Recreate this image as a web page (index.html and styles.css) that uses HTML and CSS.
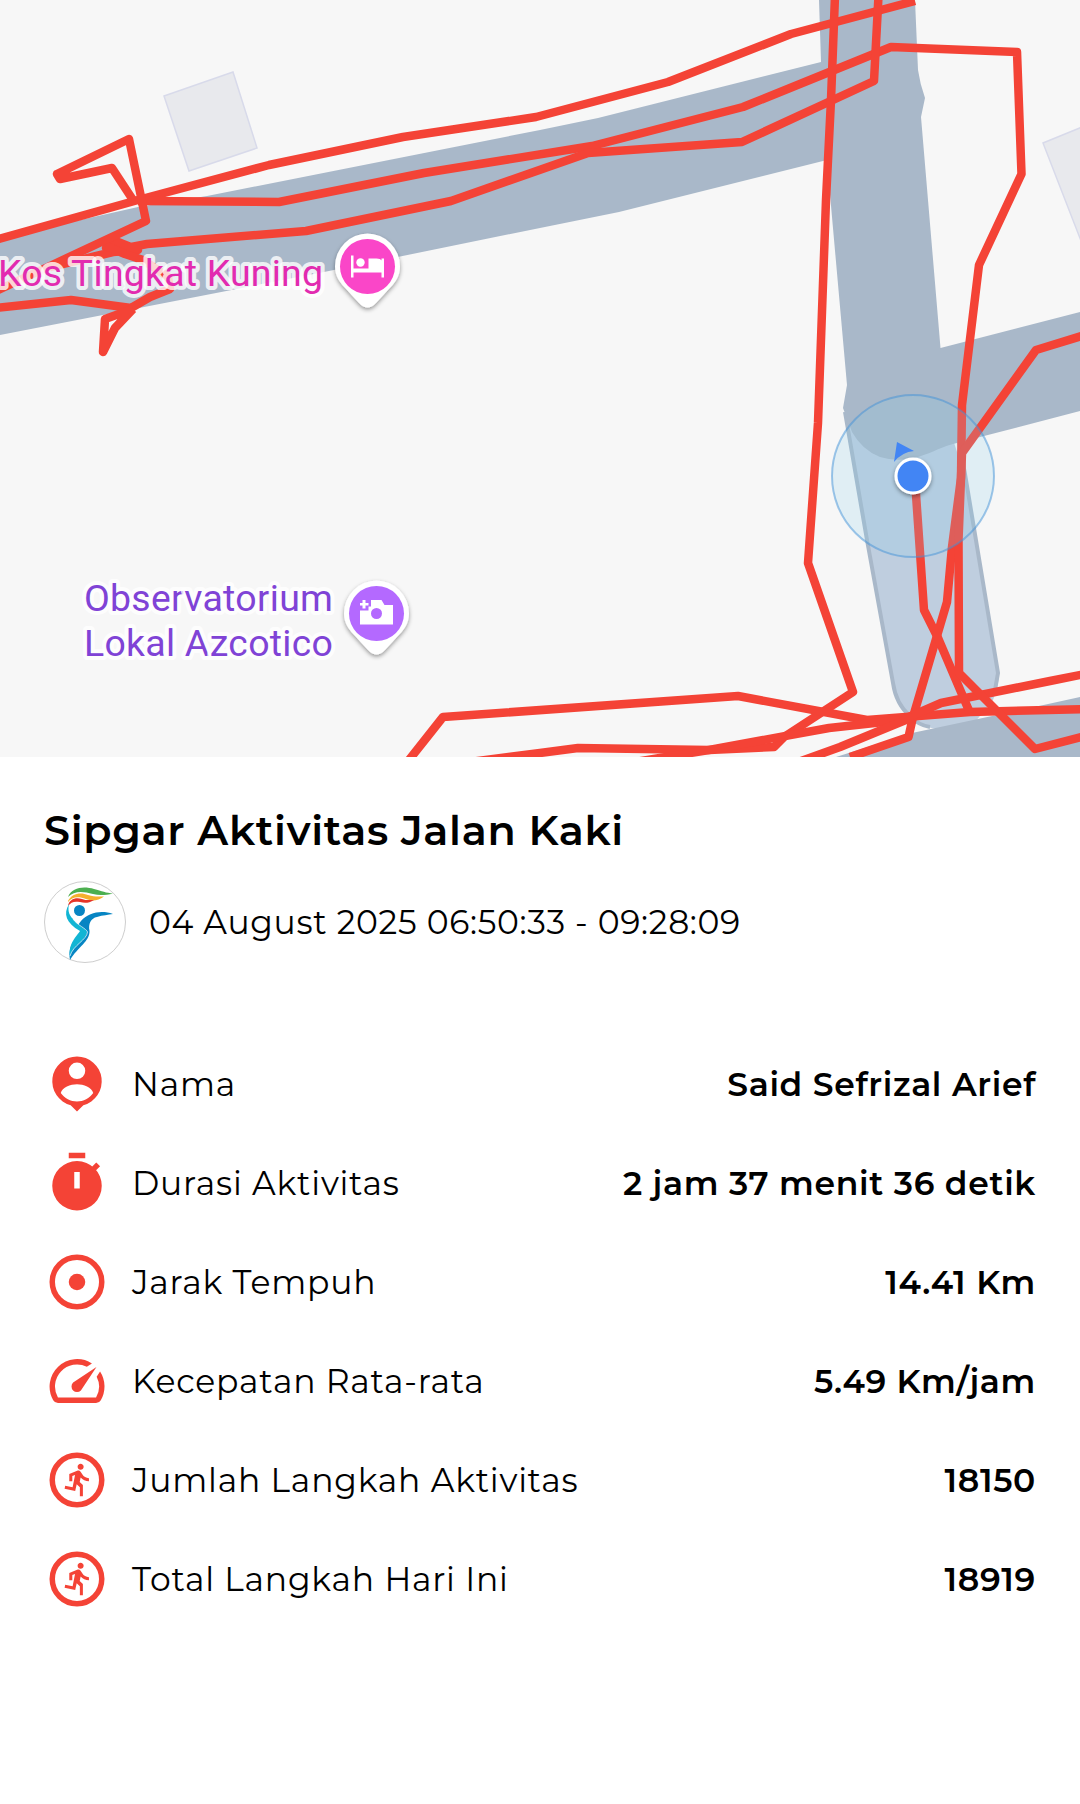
FILE: index.html
```html
<!DOCTYPE html>
<html lang="id">
<head>
    <meta charset="UTF-8">
    <meta name="viewport" content="width=device-width, initial-scale=1.0">
    <title>Sipgar Aktivitas Jalan Kaki</title>
    <link rel="stylesheet" href="styles.css">
</head>
<body>

<svg class="map" viewBox="0 0 1080 757">
    <defs>
        <filter id="shadow" x="-20%" y="-20%" width="140%" height="150%">
            <feDropShadow dx="0" dy="2" stdDeviation="2" flood-color="#000000" flood-opacity="0.4"/>
        </filter>
    </defs>

    <!-- Buildings -->
    <g class="building">
        <path d="M164 96L233 72L257 148L189 171Z"/>
        <path d="M1082 127L1043 143L1083 246Z"/>
    </g>

    <!-- Roads -->
    <path class="lane" d="M845 412L867 540L893 683Q896 704 910 716Q920 727 936 729L975 722L993 700Q999 685 999 673L965 477L950 430Z"/>
    <path class="lane-edge" d="M845 412L867 540L893 683Q896 704 910 716Q918 725 930 727M957 430L965 474L998 673L995 690"/>
    <g class="road">
        <path d="M0 238L138 207L207 196L540 130L598 118L821 62L819 0H915L918 70Q920 84 925 98L921 117L940.500 348L1080 312V411L984 436L953 444C936 449 930 454 914 458Q896 462 880 457Q862 450 852 432L843 408L847 385L832 217L827 160L619 212L540 228L324 272L0 335Z"/>
        <path d="M1080 697L1039 706L912 733L836 757H1080Z"/>
    </g>

    <!-- Recorded track -->
    <g class="track">
        <path d="M-5 240L138 200L269 165L403 137L536 117L668 82L791 34L836 22L915 1"/>
        <path d="M138 201L279 202L424 173L592 146L743 107L891 47L1017 52L1021.500 174L979 265L962 405L961 478L952 547L947 602L913 717L908.500 737L850 757"/>
        <path d="M50 267L113 252L138 250L113 240L106 248L126 248L147 244L306 231L451 201L588 153L742 142L874 81L878.500 -4"/>
        <path d="M835 -4L831 100L826 200L818 423L808 563L853 692L784 737L774 747L709 750L578 748L540 753L470 762"/>
        <path d="M133 200L112 168L60 179L57 174L129 139L146 221L50 266L-4 291"/>
        <path d="M106 246L125 254L143 260L168 277L170 289L150 297L131 308L71 300L-4 308"/>
        <path d="M133 309L105 319L103 352L115 328L133 309"/>
        <path d="M405 765L443 717L738 696L867 720L970 712L1085 709"/>
        <path d="M635 762L709 750L829 728L902 720L941 703L1050 681L1085 674"/>
        <path d="M915 480L924 610L938 638L970 713"/>
        <path d="M1085 335L1036 350L962 453L958.500 540L959 673L1035 749L1085 736"/>
        <path d="M790 765L840 747L913 717"/>
    </g>

    <!-- Current position -->
    <circle class="accuracy" cx="913" cy="476" r="81"/>
    <path class="heading" d="M897 442L914 451Q902 452 894 462Z"/>
    <circle class="dot" cx="913" cy="476" r="17" filter="url(#shadow)"/>

    <!-- Places -->
    <text class="place place-hotel" x="-2" y="286" textLength="325">Kos Tingkat Kuning</text>
    <text class="place place-photo" x="84" y="611" textLength="249">Observatorium</text>
    <text class="place place-photo" x="84" y="656" textLength="249">Lokal Azcotico</text>

    <g transform="translate(367.500 266.500)">
        <path class="pin" filter="url(#shadow)" d="M0-33A32.500 33 0 0 1 32.500 0C32.500 10 27 17 20 24L9 36Q0 46-9 36L-20 24C-27 17-32.500 10-32.500 0A32.500 33 0 0 1 0-33Z"/>
        <circle fill="#fa46c8" r="27.500"/>
        <path fill="#ffffff" d="M-16.500-11H-14V2H1V-8H9Q13-8 14-6V-8H16.500V11H14V6H-14V11H-16.500Z"/>
        <circle fill="#ffffff" cx="-7" cy="-4" r="4.200"/>
    </g>
    <g transform="translate(376.500 613.500)">
        <path class="pin" filter="url(#shadow)" d="M0-33A32.500 33 0 0 1 32.500 0C32.500 10 27 17 20 24L9 36Q0 46-9 36L-20 24C-27 17-32.500 10-32.500 0A32.500 33 0 0 1 0-33Z"/>
        <circle fill="#b469ff" r="27.500"/>
        <path fill="#ffffff" d="M-16.500-3H-8V-7H-5.500V-13.500H5L8-8.500H16.500V11H-16.500Z"/>
        <path fill="#ffffff" d="M-14-13.500H-11V-10.500H-8V-8H-11V-5H-14V-8H-16.500V-10.500H-14Z"/>
        <circle fill="#b469ff" r="5.500"/>
    </g>
</svg>

<div class="details">
    <h1 class="title">Sipgar Aktivitas Jalan Kaki</h1>
    <div class="date-row">
        <svg class="logo" viewBox="0 0 82 82">
            <circle cx="41" cy="41" r="40.500" fill="#ffffff" stroke="#b8b8b8" stroke-width="0.700"/>
            <path fill="#4caf50" d="M24 16C28 6 40 5 50 8C58 10 62 12 69 12.500C62 14 56 15 49 13C38 10 30 10 24 16Z"/>
            <path fill="#f5b02e" d="M24 20C28 12 37 11 44 14C50 16 54 15.500 60 15.500C54 20 48 20.500 42 18C34 15 28 16 24 21Z"/>
            <path fill="#e53529" d="M24 25C25 18 32 16 38 18C42 19.500 45 19 50 19C45 22 41 22.500 36 21C30 20 27 21 24 25Z"/>
            <circle cx="35.500" cy="29.500" r="5.500" fill="#0785c3"/>
            <path fill="#0785c3" d="M69 33C58 29 45 31 37 40L34 44C40 47 37 52 31 59C25 66 25 72 26 79C34 66 46 60 45.500 50C44 43 47 37 53 36C59 34 64 34 69 33Z"/>
            <path fill="#12b5d4" d="M25 23C19 33 22 42 36 50C33 55 24 62 26 76C27 66 42 60 43 51C43 48 33 44 29 38C24 33 24 28 25 23Z"/>
            <path fill="none" stroke="#ffffff" stroke-width="0.700" d="M29 38C33 44 43 48 43.500 51C43 59 29 64 26 75"/>
        </svg>
        <span class="date">04 August 2025 06:50:33 - 09:28:09</span>
    </div>

    <ul class="stats">
        <li class="stat">
            <svg class="icon" viewBox="0 0 24 24"><path fill-rule="evenodd" d="M12 2a9 9 0 0 1 2.300 17.700L12 22l-2.300-2.300A9 9 0 0 1 12 2zm0 2.200a3 3 0 1 0 0 6 3 3 0 0 0 0-6zM6.100 15.300c1.300 1.900 3.600 3.100 5.900 3.100s4.600-1.200 5.900-3.100c-.5-2-3.500-3.200-5.900-3.200s-5.400 1.200-5.900 3.200z"/></svg>
            <span class="label">Nama</span>
            <span class="value">Said Sefrizal Arief</span>
        </li>
        <li class="stat">
            <svg class="icon" viewBox="0 0 24 24"><path fill-rule="evenodd" d="M9 1h6v2H9zM12 4a9 9 0 1 0 0 18 9 9 0 0 0 0-18zm-1 4h2v6h-2z"/><path d="M17 6.500l2-2 1.400 1.400-2.400 2.400z"/></svg>
            <span class="label">Durasi Aktivitas</span>
            <span class="value">2 jam 37 menit 36 detik</span>
        </li>
        <li class="stat">
            <svg class="icon" viewBox="0 0 24 24"><circle class="ring" cx="12" cy="12" r="9"/><circle cx="12" cy="12" r="3"/></svg>
            <span class="label">Jarak Tempuh</span>
            <span class="value">14.41 Km</span>
        </li>
        <li class="stat">
            <svg class="icon" viewBox="0 0 24 24"><path d="M20.380 8.570l-1.230 1.850a8 8 0 0 1-.22 7.580H5.070A8 8 0 0 1 15.580 6.850l1.850-1.230A10 10 0 0 0 3.350 19a2 2 0 0 0 1.720 1h13.850a2 2 0 0 0 1.740-1 10 10 0 0 0-.27-10.440zm-9.790 6.840a2 2 0 0 0 2.830 0l5.660-8.490-8.490 5.660a2 2 0 0 0 0 2.830z"/></svg>
            <span class="label">Kecepatan Rata-rata</span>
            <span class="value">5.49 Km/jam</span>
        </li>
        <li class="stat">
            <svg class="icon" viewBox="0 0 24 24"><circle class="ring" cx="12" cy="12" r="9"/><path transform="translate(5.900 5.300) scale(.55)" d="M13.490 5.480c1.100 0 2-.9 2-2s-.9-2-2-2-2 .9-2 2 .9 2 2 2zm-3.600 13.900l1-4.400 2.100 2v6h2v-7.500l-2.100-2 .6-3c1.300 1.500 3.300 2.500 5.500 2.500v-2c-1.900 0-3.500-1-4.300-2.400l-1-1.600c-.4-.6-1-1-1.700-1-.3 0-.5.1-.8.1l-5.200 2.200v4.700h2v-3.400l1.800-.7-1.600 8.100-4.900-1-.4 2 7 1.400z"/></svg>
            <span class="label">Jumlah Langkah Aktivitas</span>
            <span class="value">18150</span>
        </li>
        <li class="stat">
            <svg class="icon" viewBox="0 0 24 24"><circle class="ring" cx="12" cy="12" r="9"/><path transform="translate(5.900 5.300) scale(.55)" d="M13.490 5.480c1.100 0 2-.9 2-2s-.9-2-2-2-2 .9-2 2 .9 2 2 2zm-3.600 13.900l1-4.400 2.100 2v6h2v-7.500l-2.100-2 .6-3c1.300 1.500 3.300 2.500 5.500 2.500v-2c-1.900 0-3.500-1-4.300-2.400l-1-1.600c-.4-.6-1-1-1.700-1-.3 0-.5.1-.8.1l-5.200 2.200v4.700h2v-3.400l1.800-.7-1.600 8.100-4.900-1-.4 2 7 1.400z"/></svg>
            <span class="label">Total Langkah Hari Ini</span>
            <span class="value">18919</span>
        </li>
    </ul>
</div>

</body>
</html>
```
FILE: styles.css
```css
* {
    box-sizing: border-box;
}
body {
    font-family: Montserrat, Inter, sans-serif;
    background-color: #ffffff;
    color: #000000;
    letter-spacing: 0.69px;
    margin: 0;
}

/* Map */
.map {
    display: block;
    width: 1080px;
    height: 757px;
    background-color: #f7f7f7;
    letter-spacing: 0;
}
.building {
    fill: #e8e9ed;
    stroke: #d8daea;
    stroke-width: 1.5;
}
.road {
    fill: #a9b8c9;
}
.lane {
    fill: #bfcedf;
}
.lane-edge {
    fill: none;
    stroke: #a9b8c9;
    stroke-width: 4;
}
.track {
    fill: none;
    stroke: #f44336;
    stroke-width: 8.5;
    stroke-linejoin: round;
}
.accuracy {
    fill: rgba(135, 206, 235, 0.2);
    stroke: rgba(66, 145, 215, 0.5);
    stroke-width: 2;
}
.heading {
    fill: #4285f4;
}
.dot {
    fill: #4285f4;
    stroke: #ffffff;
    stroke-width: 3;
}
.place {
    font-family: Roboto, sans-serif;
    font-size: 37.5px;
    stroke: rgba(255, 255, 255, 0.8);
    stroke-width: 8;
    stroke-linejoin: round;
    paint-order: stroke;
}
.place-hotel {
    fill: #e22bb0;
}
.place-photo {
    fill: #8043d6;
}
.pin {
    fill: #ffffff;
}

/* Activity details */
.details {
    padding: 44px 44px 0;
}
.title {
    font-size: 41.25px;
    font-weight: 600;
    line-height: 58px;
    margin: 0;
}
.date-row {
    display: flex;
    align-items: center;
    gap: 23px;
    height: 82px;
    margin-top: 22px;
}
.logo {
    width: 82px;
    height: 82px;
}
.date {
    font-size: 33px;
}
.stats {
    list-style: none;
    padding: 0;
    margin: 71px 0 0;
}
.stat {
    display: flex;
    align-items: center;
    height: 99px;
}
.icon {
    width: 66px;
    height: 66px;
    fill: #f44336;
    margin-right: 22px;
}
.ring {
    fill: none;
    stroke: #f44336;
    stroke-width: 2;
}
.label {
    flex: 1;
    font-size: 33px;
    letter-spacing: 0.8px;
}
.value {
    font-size: 33px;
    font-weight: 600;
}
```
